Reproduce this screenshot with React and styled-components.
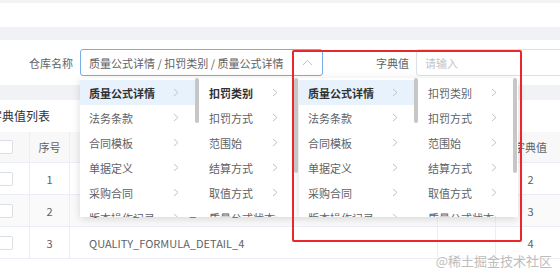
import React from 'react';
import styled, { createGlobalStyle } from 'styled-components';

const GlobalStyle = createGlobalStyle`
  html, body {
    margin: 0;
    padding: 0;
    background: #f0f2f5;
    overflow: hidden;
    font-family: "Noto Sans CJK SC", "Noto Sans", sans-serif;
    color: #606266;
  }
`;

const Page = styled.div`
  position: relative;
  width: 560px;
  height: 278px;
  overflow: hidden;
`;

const TopBar = styled.div`
  height: 24px;
  background: #fff;
  border-top: 3px solid #f3f3f3;
`;

const FormCard = styled.div`
  position: relative;
  margin-top: 13px;
  height: 45px;
  background: #fff;
  display: flex;
  align-items: center;
  padding-left: 29px;
`;

const Label = styled.span`
  font-size: 11px;
  color: #606266;
  margin-right: 7px;
  margin-left: ${p => p.$offset || 0}px;
  white-space: nowrap;
`;

const Input = styled.div`
  box-sizing: border-box;
  height: 27px;
  width: ${p => p.$width}px;
  flex-shrink: 0;
  border: 1px solid ${p => (p.$focus ? '#76aee6' : '#dcdfe6')};
  border-radius: 3px;
  display: flex;
  align-items: center;
  justify-content: space-between;
  padding: 0 9px 0 8px;
  font-size: 11px;
  color: ${p => (p.$placeholder ? '#c0c4cc' : '#606266')};
  white-space: nowrap;
`;

const Dropdown = styled.div`
  position: absolute;
  left: 80px;
  top: 38px;
  display: flex;
  z-index: 5;
`;

const Panel = styled.div`
  display: flex;
  height: 139px;
  background: #fff;
  box-shadow: 0 2px 8px rgba(0, 0, 0, 0.14);
  overflow: hidden;
`;

const Column = styled.div`
  position: relative;
  width: ${p => p.$width}px;
  padding-top: 2px;
  box-sizing: border-box;
`;

const Thumb = styled.div`
  position: absolute;
  right: 1px;
  top: 0;
  width: 4px;
  height: ${p => p.$len}px;
  background: #c6c6c6;
  border-radius: 2px;
`;

const Item = styled.div`
  height: 25px;
  display: flex;
  align-items: center;
  justify-content: space-between;
  padding: 0 16px 0 9px;
  margin-right: 5px;
  font-size: 11px;
  white-space: nowrap;
  color: ${p => (p.$bold ? '#303133' : '#606266')};
  font-weight: ${p => (p.$bold ? 700 : 400)};
  background: ${p => (p.$active ? '#e8f2fc' : 'transparent')};
`;

const Arrow = () => (
  <svg width="6" height="9" viewBox="0 0 6 9">
    <polyline points="1,1 5,4.5 1,8" fill="none" stroke="#c0c4cc" strokeWidth="1" />
  </svg>
);

const UpArrow = () => (
  <svg width="11" height="7" viewBox="0 0 11 7">
    <polyline points="1,6 5.5,1.5 10,6" fill="none" stroke="#c0c4cc" strokeWidth="1" />
  </svg>
);

const TableCard = styled.div`
  margin-top: 15px;
  margin-left: -10px;
  background: #fff;
  height: 200px;
`;

const Title = styled.div`
  height: 32px;
  line-height: 32px;
  font-size: 12px;
  color: #303133;
`;

const Row = styled.div`
  display: grid;
  grid-template-columns: 40px 40px 368px 58px 70px;
  height: ${p => (p.$head ? 31 : 32)}px;
  background: ${p => (p.$head ? '#f8f8f9' : p.$stripe ? '#fafafa' : '#fff')};
  border-bottom: 1px solid #ebeef5;
  box-sizing: border-box;
`;

const Cell = styled.div`
  display: flex;
  align-items: center;
  justify-content: ${p => (p.$left ? 'flex-start' : 'center')};
  padding-left: ${p => p.$pad || 0}px;
  border-right: 1px solid #ebeef5;
  font-size: 11px;
  color: #606266;
  white-space: nowrap;
`;

const Check = styled.span`
  width: 12px;
  height: 12px;
  border: 1px solid #dcdfe6;
  border-radius: 2px;
  background: #fff;
`;

const Annotation = styled.div`
  position: absolute;
  left: 292px;
  top: 50px;
  width: 226px;
  height: 188px;
  border: 2px solid #e8282b;
  border-radius: 2px;
  z-index: 10;
`;

const Watermark = styled.div`
  position: absolute;
  right: 8px;
  bottom: 8px;
  font-size: 13px;
  color: #bdbdbd;
  z-index: 10;
`;

const level1 = ['质量公式详情', '法务条款', '合同模板', '单据定义', '采购合同', '版本操作记录'];
const level2 = ['扣罚类别', '扣罚方式', '范围始', '结算方式', '取值方式', '质量公式状态'];

const MenuColumn = ({ items, width, thumb, bold, active }) => (
  <Column $width={width}>
    {items.map((t, i) => (
      <Item key={t} $bold={bold && i === 0} $active={active && i === 0}>
        {t}
        <Arrow />
      </Item>
    ))}
    <Thumb $len={thumb} />
  </Column>
);

const rows = [
  { no: 1, code: 'QUALITY_FORMULA_DETAIL_2', val: 2 },
  { no: 2, code: 'QUALITY_FORMULA_DETAIL_3', val: 3 },
  { no: 3, code: 'QUALITY_FORMULA_DETAIL_4', val: 4 },
];

const App = () => (
  <Page>
    <GlobalStyle />
    <TopBar />
    <FormCard>
      <Label>仓库名称</Label>
      <Input $width={243} $focus>
        质量公式详情 / 扣罚类别 / 质量公式详情
        <UpArrow />
      </Input>
      <Label $offset={53}>字典值</Label>
      <Input $width={200} $placeholder>请输入</Input>
      <Dropdown>
        <Panel>
          <MenuColumn items={level1} width={120} thumb={45} bold active />
          <MenuColumn items={level2} width={99} thumb={95} bold />
        </Panel>
        <Panel>
          <MenuColumn items={level1} width={120} thumb={45} bold active />
          <MenuColumn items={level2} width={99} thumb={95} />
        </Panel>
      </Dropdown>
    </FormCard>
    <TableCard>
      <Title>字典值列表</Title>
      <Row $head>
        <Cell $left $pad={9}><Check /></Cell>
        <Cell>序号</Cell>
        <Cell />
        <Cell />
        <Cell>字典值</Cell>
      </Row>
      {rows.map((r, i) => (
        <Row key={r.no} $stripe={i === 1}>
          <Cell $left $pad={9}><Check /></Cell>
          <Cell>{r.no}</Cell>
          <Cell $left $pad={19}>{r.code}</Cell>
          <Cell />
          <Cell>{r.val}</Cell>
        </Row>
      ))}
    </TableCard>
    <Annotation />
    <Watermark>@稀土掘金技术社区</Watermark>
  </Page>
);

export default App;
